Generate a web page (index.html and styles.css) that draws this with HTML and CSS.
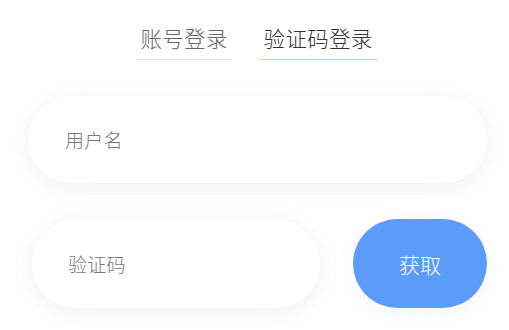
FILE: index.html
```html
<!DOCTYPE html>
<html lang="zh-CN">
<head>
<meta charset="utf-8">
<title>登录</title>
<link rel="stylesheet" href="styles.css">
</head>
<body>
<div class="page">
  <div class="tabs">
    <div class="tab">账号登录</div>
    <div class="tab tab-active">验证码登录</div>
  </div>
  <div class="field field-user">
    <span class="placeholder">用户名</span>
  </div>
  <div class="code-row">
    <div class="field field-code">
      <span class="placeholder">验证码</span>
    </div>
    <div class="btn-get">获取</div>
  </div>
</div>
</body>
</html>
```
FILE: styles.css
```css
html, body {
  margin: 0;
  padding: 0;
  background: #ffffff;
}
body {
  font-family: "Noto Sans CJK SC", "Noto Sans", sans-serif;
  font-weight: 300;
  width: 509px;
  height: 330px;
  overflow: hidden;
}
.page {
  display: flex;
  flex-direction: column;
  padding-top: 23px;
}
.tabs {
  display: flex;
  justify-content: center;
  gap: 28px;
  padding-left: 4px;
}
.tab {
  font-size: 21.5px;
  line-height: 30px;
  color: #666666;
  padding: 0 4px 6px;
  border-bottom: 1px solid #e2e2e2;
  letter-spacing: 0.3px;
}
.tab-active {
  color: #333333;
  border-bottom-color: #f0bf9e;
}
.field {
  background: #ffffff;
  border-radius: 44px;
  box-shadow: 0 4px 26px rgba(90, 100, 125, 0.09);
  display: flex;
  align-items: center;
  box-sizing: border-box;
}
.placeholder {
  font-size: 19px;
  color: #777777;
  letter-spacing: 0.2px;
}
.field-user {
  margin: 36px 22px 0 28px;
  height: 87px;
  padding-left: 37px;
}
.code-row {
  display: flex;
  align-items: center;
  margin: 36px 22px 0 32px;
  gap: 33px;
}
.field-code {
  width: 288px;
  height: 88px;
  padding-left: 36px;
}
.btn-get {
  width: 134px;
  height: 89px;
  border-radius: 45px;
  background: #5b9cf8;
  color: #ffffff;
  font-size: 21px;
  display: flex;
  align-items: center;
  justify-content: center;
  box-shadow: 0 4px 22px rgba(90, 100, 125, 0.07);
}
```
